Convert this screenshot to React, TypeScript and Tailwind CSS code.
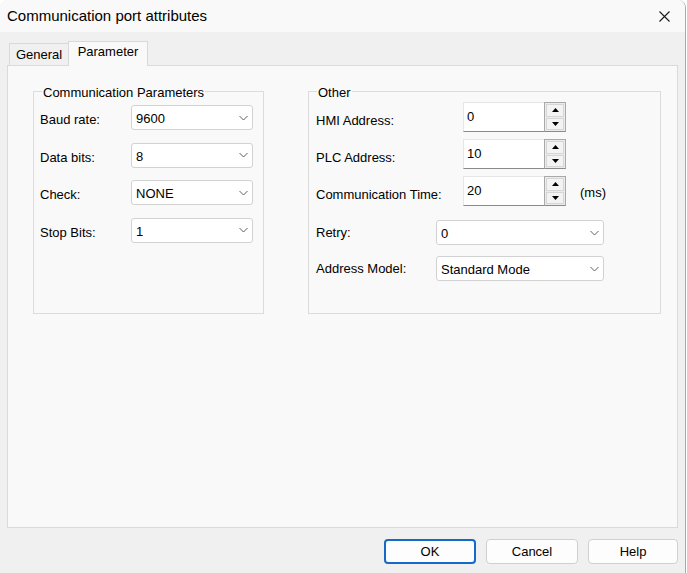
import React from "react";

function Chevron() {
  return (
    <svg width="9" height="6" viewBox="0 0 9 6" className="shrink-0">
      <path d="M0.5 1 L4.5 5 L8.5 1" fill="none" stroke="#606060" strokeWidth="1" />
    </svg>
  );
}

function Combo({ value, w }: { value: string; w: string }) {
  return (
    <div
      className={`${w} h-[25px] bg-white border border-[#d2d2d2] rounded-[3px] flex items-center justify-between pl-[4px] pr-[4px]`}
    >
      <span className="leading-[15px] pt-[2px]">{value}</span>
      <Chevron />
    </div>
  );
}

function SpinBtn({ up }: { up: boolean }) {
  return (
    <div className="flex-1 border border-[#d6d6d6] bg-[#f3f3f3] flex items-center justify-center">
      <svg width="7" height="4" viewBox="0 0 7 4">
        {up ? <path d="M0 4 L3.5 0 L7 4 Z" fill="#000" /> : <path d="M0 0 L3.5 4 L7 0 Z" fill="#000" />}
      </svg>
    </div>
  );
}

function Spinner({ value }: { value: string }) {
  return (
    <div className="flex h-[30px] w-[103px]">
      <div className="flex-1 bg-white border-t border-l border-[#e6e6e6] border-b border-b-[#8a8a8a] pl-[3px] pt-[6px] leading-[15px]">
        {value}
      </div>
      <div className="w-[22px] flex flex-col gap-[1px] p-[1px] border border-[#a9a9a9] border-b-[#8a8a8a] bg-[#ececec]">
        <SpinBtn up />
        <SpinBtn up={false} />
      </div>
    </div>
  );
}

function Group({ title, w, children }: { title: string; w: string; children: React.ReactNode }) {
  return (
    <div className={`relative ${w} h-[223px] border border-[#dcdcdc]`}>
      <span className="absolute top-[-7px] left-[8px] px-[1px] bg-[#f9f9f9] leading-[15px]">{title}</span>
      {children}
    </div>
  );
}

export default function App() {
  const leftRows = [
    ["Baud rate:", "9600"],
    ["Data bits:", "8"],
    ["Check:", "NONE"],
    ["Stop Bits:", "1"],
  ];
  const spinRows = [
    ["HMI Address:", "0"],
    ["PLC Address:", "10"],
    ["Communication Time:", "20"],
  ];
  return (
    <div className="w-[687px] h-[573px] overflow-hidden bg-white font-['Liberation_Sans',Arial,sans-serif] text-[13px] text-black">
      <div className="w-[686px] h-[580px] rounded-[8px] border-r border-[#a9a9a9] bg-[#f0f0f0] flex flex-col overflow-hidden">
        {/* title bar */}
        <div className="h-[32px] shrink-0 bg-[#f9f9f9] flex items-center justify-between pl-[7px] pr-[15px]">
          <span className="text-[15px] leading-[18px] pb-[1px]">Communication port attributes</span>
          <svg width="11" height="11" viewBox="0 0 11 11">
            <path d="M0.5 0.5 L10.5 10.5 M10.5 0.5 L0.5 10.5" stroke="#1a1a1a" strokeWidth="1.1" />
          </svg>
        </div>

        <div className="flex flex-col px-[7px]">
          {/* tabs */}
          <div className="mt-[9px] h-[24px] flex items-end pl-[2px]">
            <div className="w-[59px] h-[22px] border-l border-t border-[#d9d9d9] bg-[#f0f0f0] flex justify-center pt-[3px] leading-[15px]">
              General
            </div>
            <div className="relative z-10 w-[80px] h-[25px] -mb-[1px] border-l border-t border-r border-[#d9d9d9] bg-[#f9f9f9] flex justify-center pt-[2px] leading-[15px]">
              Parameter
            </div>
          </div>

          {/* panel */}
          <div className="h-[463px] border border-[#dadada] bg-[#f9f9f9] pl-[25px] pt-[25px] flex items-start gap-[44px]">
            <Group title="Communication Parameters" w="w-[231px]">
              <div className="flex flex-col pt-[13px] pl-[6px] gap-[12.5px]">
                {leftRows.map(([l, v]) => (
                  <div key={l} className="flex items-center h-[25px]">
                    <span className="w-[91px] leading-[15px] pt-[4px]">{l}</span>
                    <Combo value={v} w="w-[122px]" />
                  </div>
                ))}
              </div>
            </Group>

            <Group title="Other" w="w-[353px]">
              <div className="flex flex-col pt-[10px] pl-[7px]">
                <div className="flex flex-col gap-[7px]">
                  {spinRows.map(([l, v], i) => (
                    <div key={l} className="flex items-center h-[30px]">
                      <span className="w-[147px] leading-[15px] pt-[6px]">{l}</span>
                      <Spinner value={v} />
                      {i === 2 && <span className="ml-[14px] leading-[15px] pt-[2px]">(ms)</span>}
                    </div>
                  ))}
                </div>
                <div className="flex flex-col gap-[11px] mt-[14px]">
                  <div className="flex items-center h-[25px]">
                    <span className="w-[120px] leading-[15px]">Retry:</span>
                    <Combo value="0" w="w-[168px]" />
                  </div>
                  <div className="flex items-center h-[25px]">
                    <span className="w-[120px] leading-[15px]">Address Model:</span>
                    <Combo value="Standard Mode" w="w-[168px]" />
                  </div>
                </div>
              </div>
            </Group>
          </div>

          {/* buttons */}
          <div className="mt-[11px] h-[25px] flex justify-end gap-[10px]">
            <button className="w-[92px] h-[25px] rounded-[4px] border-2 border-[#1569c7] bg-[#fdfdfd] leading-[15px]">
              OK
            </button>
            <button className="w-[92px] h-[25px] rounded-[4px] border border-[#d0d0d0] bg-[#fdfdfd] leading-[15px]">
              Cancel
            </button>
            <button className="w-[90px] h-[25px] rounded-[4px] border border-[#d0d0d0] bg-[#fdfdfd] leading-[15px]">
              Help
            </button>
          </div>
        </div>
      </div>
    </div>
  );
}
